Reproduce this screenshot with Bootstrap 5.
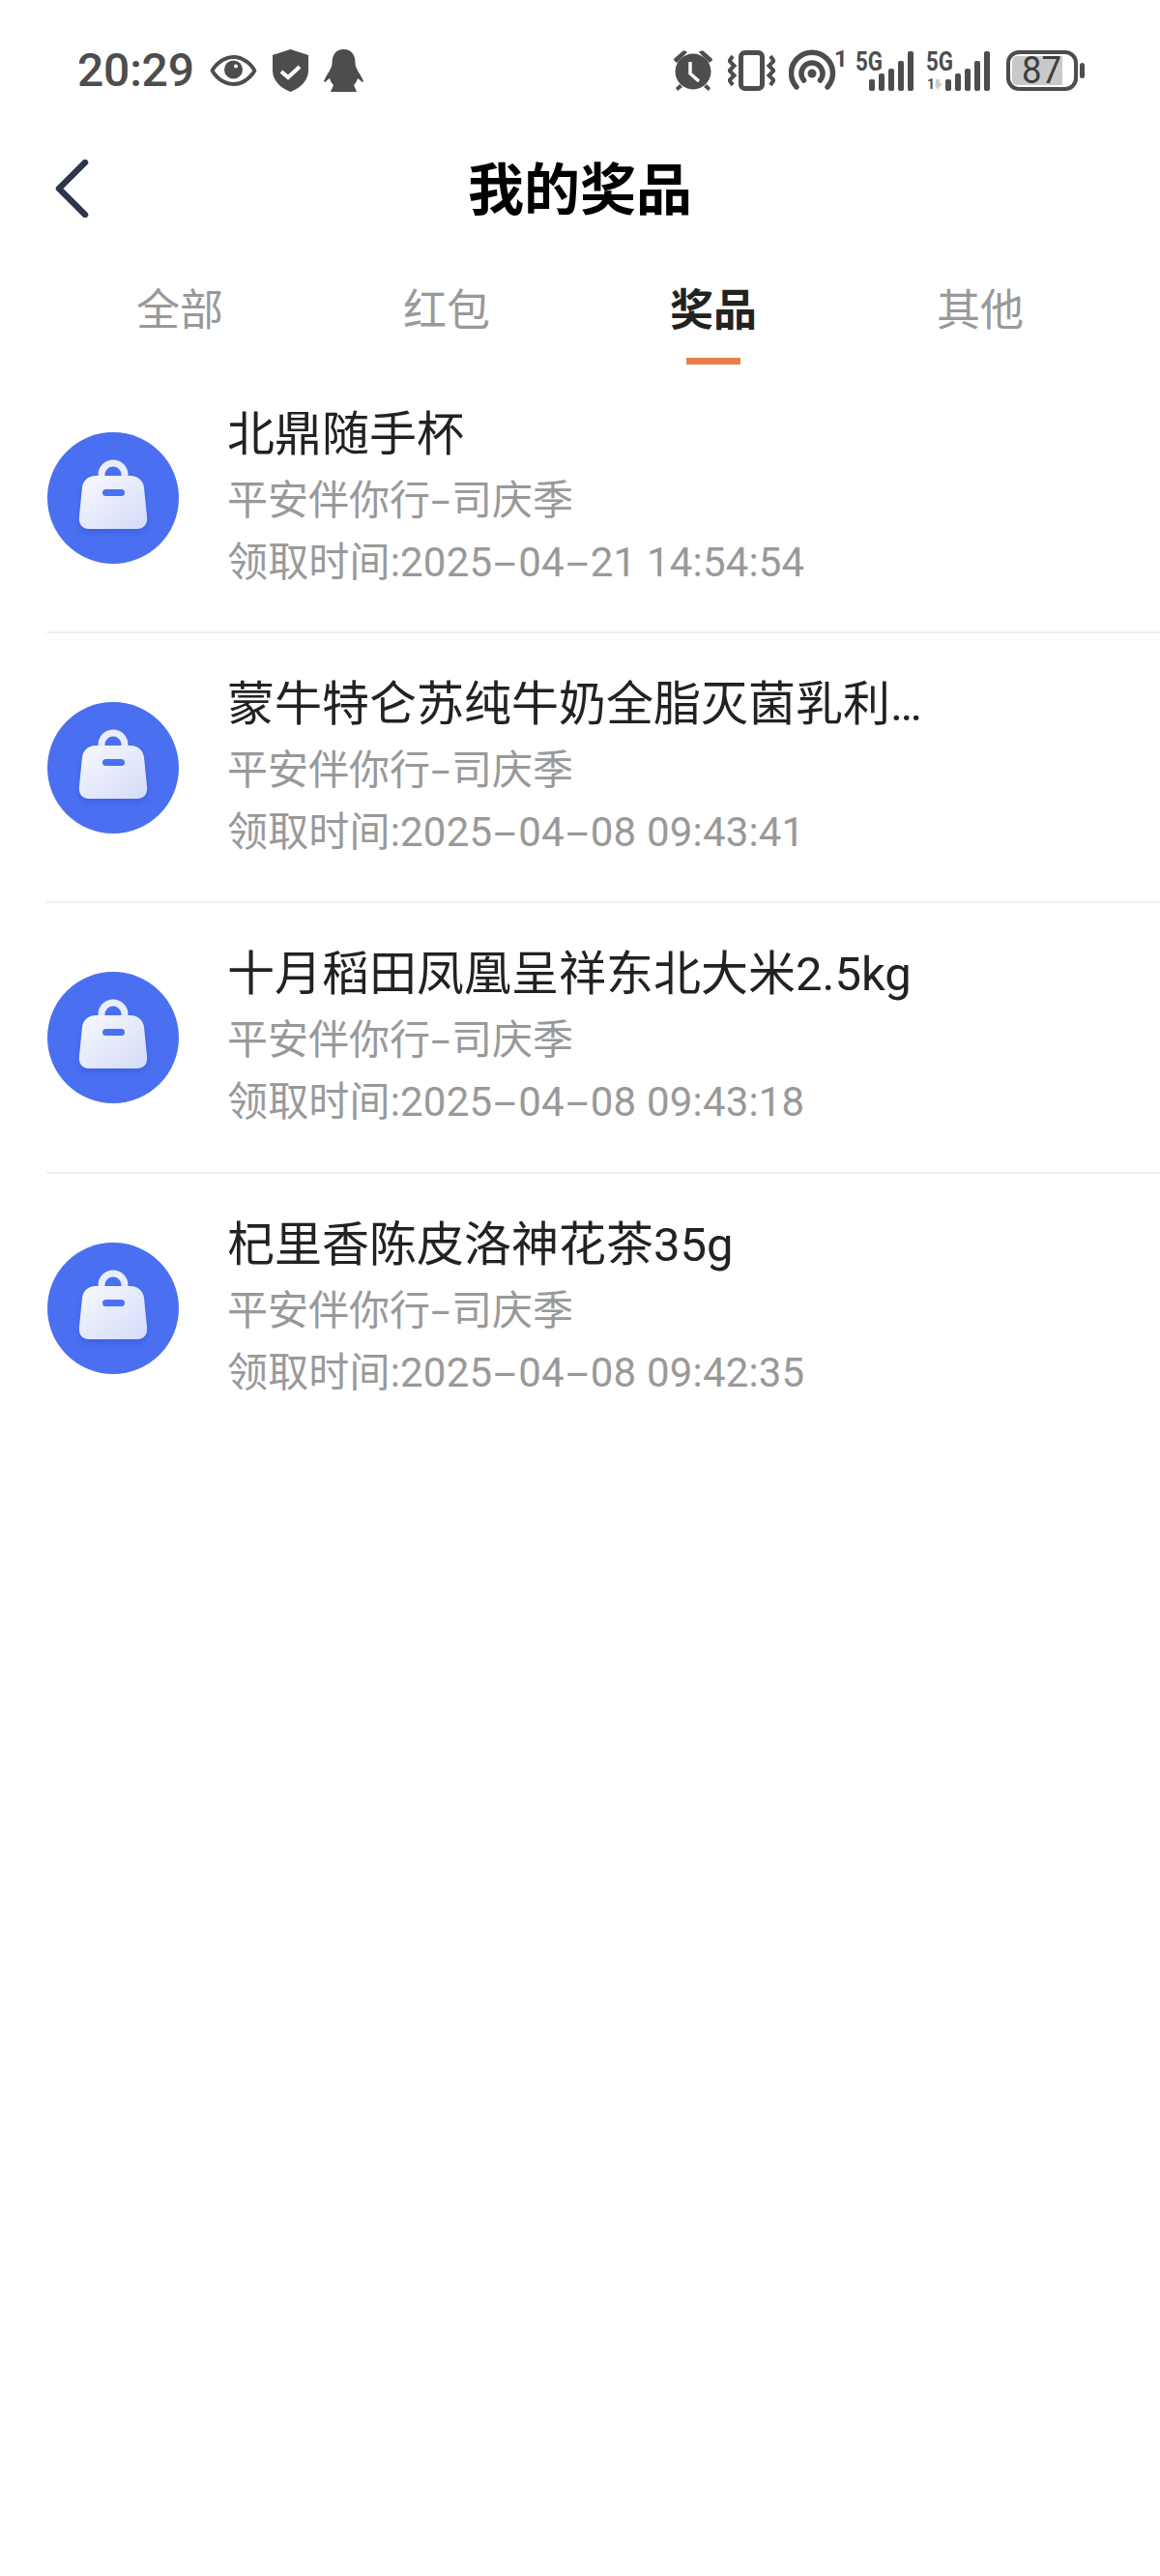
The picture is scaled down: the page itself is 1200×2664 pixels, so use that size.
<!doctype html>
<html lang="zh"><head><meta charset="utf-8"><title>我的奖品</title>
<link href="https://cdn.jsdelivr.net/npm/bootstrap@5.3.0/dist/css/bootstrap.min.css" rel="stylesheet">
<style>
html,body{background:#fff;height:100%}
body{font-family:"Roboto","Noto Sans CJK SC",sans-serif;overflow:hidden}
.sbar{height:146px;padding:0 78px 0 80px;color:#4d4d4d}
.sbar-time{font-size:48px;line-height:1;letter-spacing:-.2px;font-weight:500;color:#4d4d4d}
.sbar svg{display:block;fill:#4d4d4d}
.sleft{gap:16px}
.g16{margin-left:16px}.g14{margin-left:14px}.g9{margin-left:9px}.g12{margin-left:12px}
.head{height:100px;position:relative;margin-top:-1px}
.head-title{font-size:58px;font-weight:700;color:#000;line-height:1;font-family:"Noto Sans CJK SC",sans-serif;margin-top:-6px}
.back{position:absolute;left:56px;top:20px}
.tabs-row{padding:0 48px;margin-top:23px;height:108px}
.tab-item{flex:1 1 0;text-align:center;font-size:45px;line-height:1;color:#999;font-family:"Noto Sans CJK SC",sans-serif;padding-top:27px;position:relative}
.tab-item.on{color:#222;font-weight:700}
.tab-item.on::after{content:"";position:absolute;left:50%;margin-left:-28px;width:56px;height:7px;top:102px;background:#e8804a}
.plist{padding-left:48px}
.prow{height:279.2px;border-bottom:2px solid #f0f0f0;gap:50px}
.prow:last-child{border-bottom:0}
.avatar{width:136px;height:136px;flex:none;display:block;margin-left:1px}
.ptext{padding-top:3px}
.pname{font-size:49px;line-height:62px;margin-bottom:5px;color:#222;white-space:nowrap}
.psub{font-size:42px;line-height:64px;color:#999;white-space:nowrap}
.pdate{letter-spacing:.18px}
.dsh{display:inline-block;width:27px;text-align:center;transform:scaleX(2)}
.dsh-n{width:22px;transform:scaleX(1.7)}
</style></head>
<body>
<svg width="0" height="0" class="position-absolute"><defs>
<linearGradient id="bagg" x1="0" y1="0" x2="1" y2="1"><stop offset="0" stop-color="#f8f9fe"/><stop offset="1" stop-color="#d3dbf8"/></linearGradient>
<filter id="bags" x="-20%" y="-20%" width="140%" height="140%"><feGaussianBlur stdDeviation="3"/></filter>
<symbol id="bagicon" viewBox="0 0 136 136"><circle cx="68" cy="68" r="68" fill="#4a70f1"/><path d="M56 49v-5a12 12 0 0 1 24 0v5" fill="none" stroke="#e9edfc" stroke-width="7"/><path d="M50 45h36c8 0 13 5 14 12l3 30c1 8-3 13-10 13H43c-7 0-11-5-10-13l3-30c1-7 6-12 14-12z" fill="#2f50cf" opacity=".45" filter="url(#bags)" transform="translate(0 4)"/><path d="M50 45h36c8 0 13 5 14 12l3 30c1 8-3 13-10 13H43c-7 0-11-5-10-13l3-30c1-7 6-12 14-12z" fill="url(#bagg)"/><rect x="57" y="59" width="23" height="7" rx="3.500" fill="#4a70f1"/></symbol>
</defs></svg>
<div class="sbar d-flex align-items-center justify-content-between">
  <div class="d-flex align-items-center sleft">
    <span class="sbar-time">20:29</span>
    <svg width="49" height="34" viewBox="0 0 49 34"><path fill-rule="evenodd" d="M24.500 1C37 1 46 11 48.500 17 46 23 37 33 24.500 33S3 23 .5 17C3 11 12 1 24.500 1zm0 4C15 5 8 12 4.800 17 8 22 15 29 24.500 29S41 22 44.200 17C41 12 34 5 24.500 5z"/><circle cx="24.500" cy="16" r="9.500"/><circle cx="27" cy="12.500" r="2" fill="#fff"/></svg>
    <svg width="37" height="44" viewBox="0 0 37 44"><path d="M18.500 0 37 6v16c0 10-8 18-18.500 22C8 40 0 32 0 22V6z"/><path d="M9 23l7 6 12-11" fill="none" stroke="#fff" stroke-width="4"/></svg>
    <svg width="41" height="44" viewBox="0 0 41 44"><path d="M20.500 0c8 0 12 6 12 14 0 3 1 5 3 9 2 3 4 6 5.500 10l-1 1-5-4c-1 3-2 5-4 7l3 7H7l3-7c-2-2-3-4-4-7l-5 4-1-1c1.500-4 3.500-7 5.500-10 2-4 3-6 3-9 0-8 4-14 12-14z"/></svg>
  </div>
  <div class="d-flex align-items-center">
    <svg width="40" height="42" viewBox="0 0 40 42"><path d="M0 9 9 1c2-1 4 0 5 1L3 13C2 12-1 10 0 9zm40 0L31 1c-2-1-4 0-5 1l11 11c1-1 4-3 3-4z"/><path d="M6 35 2 39l2 3 5-4zm28 0 4 4-2 3-5-4z"/><circle cx="20" cy="22" r="18.500"/><path d="M17 12v12l9 8" fill="none" stroke="#fff" stroke-width="3.500"/></svg>
    <svg class="g16" width="49" height="42" viewBox="0 0 49 42"><rect x="13.500" y="2.500" width="22" height="37" rx="4" fill="none" stroke="#4d4d4d" stroke-width="5"/><path d="M5 6 1.500 11l5 5-5 5 5 5-5 5 3.500 5M44 6l3.500 5-5 5 5 5-5 5 5 5-3.500 5" fill="none" stroke="#4d4d4d" stroke-width="4"/></svg>
    <svg class="g14" width="60" height="50" viewBox="0 -4 60 50"><g fill="none" stroke="#4d4d4d" stroke-width="5.500" stroke-linecap="round"><path d="M8 38A21.500 21.500 0 1 1 40 38"/><path d="M15.500 31A11 11 0 1 1 32.500 31"/></g><circle cx="24" cy="24" r="4.500"/><text x="47" y="17" font-size="24" font-weight="700" fill="#4d4d4d" font-family="Roboto">1</text></svg>
    <svg class="g9" width="61" height="50" viewBox="0 -4 61 50"><text x="0" y="21" font-size="27" font-weight="700" fill="#4d4d4d" font-family="Roboto" textLength="28" lengthAdjust="spacingAndGlyphs">5G</text><rect x="14" y="30" width="6" height="12" rx="2"/><rect x="24" y="24" width="6" height="18" rx="2"/><rect x="34" y="19" width="6" height="23" rx="2"/><rect x="44" y="11" width="6" height="31" rx="2"/><rect x="54" y="1" width="6" height="41" rx="2"/></svg>
    <svg class="g12" width="67" height="50" viewBox="0 -4 67 50"><text x="0" y="21" font-size="27" font-weight="700" fill="#4d4d4d" font-family="Roboto" textLength="28" lengthAdjust="spacingAndGlyphs">5G</text><text x="1" y="40" font-size="14" font-weight="700" fill="#4d4d4d" font-family="Roboto">1</text><path d="M10 30h4v4h3l-5 7-3-5h1z" fill="#ccc"/><rect x="20" y="30" width="6" height="12" rx="2"/><rect x="30" y="24" width="6" height="18" rx="2"/><rect x="40" y="19" width="6" height="23" rx="2"/><rect x="50" y="11" width="6" height="31" rx="2"/><rect x="60" y="1" width="6" height="41" rx="2"/></svg>
    <svg class="g16" width="81" height="42" viewBox="0 0 81 42"><rect x="2" y="2" width="70" height="38" rx="11" fill="none" stroke="#4d4d4d" stroke-width="4"/><path d="M11 6h47v30H11a5 5 0 0 1-5-5V11a5 5 0 0 1 5-5z" fill="#c9c9c9"/><rect x="76" y="13" width="5" height="16" rx="2.500"/><text x="16" y="34" font-size="38" fill="#3f3f3f" font-family="Roboto" textLength="41" lengthAdjust="spacingAndGlyphs">87</text></svg>
  </div>
</div>
<div class="head d-flex align-items-center justify-content-center">
  <svg class="back" width="36" height="60" viewBox="0 0 36 60"><path d="M32 3 5 30l27 27" fill="none" stroke="#30354f" stroke-width="6.500" stroke-linecap="round" stroke-linejoin="round"/></svg>
  <div class="head-title">我的奖品</div>
</div>
<div class="tabs-row d-flex">
  <div class="tab-item">全部</div><div class="tab-item">红包</div><div class="tab-item on">奖品</div><div class="tab-item">其他</div>
</div>
<div class="plist">
  <div class="prow d-flex align-items-center"><svg class="avatar"><use href="#bagicon"/></svg>
    <div class="ptext"><div class="pname">北鼎随手杯</div><div class="psub">平安伴你行<span class="dsh dsh-n">-</span>司庆季</div><div class="psub pdate">领取时间:2025<span class="dsh">-</span>04<span class="dsh">-</span>21 14:54:54</div></div></div>
  <div class="prow d-flex align-items-center"><svg class="avatar"><use href="#bagicon"/></svg>
    <div class="ptext"><div class="pname">蒙牛特仑苏纯牛奶全脂灭菌乳利…</div><div class="psub">平安伴你行<span class="dsh dsh-n">-</span>司庆季</div><div class="psub pdate">领取时间:2025<span class="dsh">-</span>04<span class="dsh">-</span>08 09:43:41</div></div></div>
  <div class="prow d-flex align-items-center"><svg class="avatar"><use href="#bagicon"/></svg>
    <div class="ptext"><div class="pname">十月稻田凤凰呈祥东北大米2.5kg</div><div class="psub">平安伴你行<span class="dsh dsh-n">-</span>司庆季</div><div class="psub pdate">领取时间:2025<span class="dsh">-</span>04<span class="dsh">-</span>08 09:43:18</div></div></div>
  <div class="prow d-flex align-items-center"><svg class="avatar"><use href="#bagicon"/></svg>
    <div class="ptext"><div class="pname">杞里香陈皮洛神花茶35g</div><div class="psub">平安伴你行<span class="dsh dsh-n">-</span>司庆季</div><div class="psub pdate">领取时间:2025<span class="dsh">-</span>04<span class="dsh">-</span>08 09:42:35</div></div></div>
</div>
<script src="https://cdn.jsdelivr.net/npm/bootstrap@5.3.0/dist/js/bootstrap.bundle.min.js"></script>
</body></html>
